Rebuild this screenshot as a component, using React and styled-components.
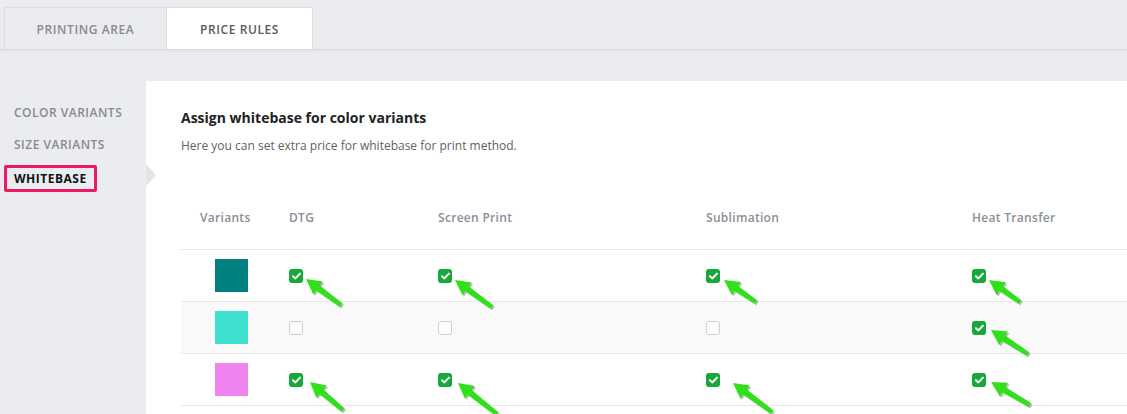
import React from 'react';
import styled, { createGlobalStyle } from 'styled-components';

const GlobalStyle = createGlobalStyle`
  body {
    margin: 0;
    background: #ebecf0;
    font-family: 'Open Sans', 'Liberation Sans', sans-serif;
  }
`;

const Page = styled.div`
  width: 1127px;
  height: 414px;
  overflow: hidden;
  background: #ebecf0;
`;

const TabBar = styled.div`
  display: flex;
  height: 42px;
  padding: 7px 0 0 4px;
  border-bottom: 1px solid #d9dade;
  box-shadow: 0 2px 0 #e4e5e9;
`;

const Tab = styled.div`
  width: ${(p) => p.width}px;
  height: 42px;
  box-sizing: border-box;
  border: 1px solid #dcdde1;
  border-bottom: none;
  border-left: ${(p) => (p.active ? 'none' : '1px solid #dcdde1')};
  background: ${(p) => (p.active ? '#fff' : '#ebecf0')};
  color: ${(p) => (p.active ? '#5a5a5a' : '#8a8a8a')};
  display: flex;
  align-items: center;
  justify-content: center;
  font-size: 12px;
  font-weight: 600;
  letter-spacing: 0.6px;
  padding-top: 1px;
`;

const Body = styled.div`
  display: flex;
  margin-top: 31px;
`;

const Sidebar = styled.div`
  width: 146px;
  padding-top: 15px;
  flex-shrink: 0;
`;

const SideItem = styled.div`
  position: relative;
  height: 32px;
  display: flex;
  align-items: center;
  padding-left: ${(p) => (p.active ? '4px' : '14px')};

  ${(p) =>
    p.active &&
    `
    &::after {
      content: '';
      position: absolute;
      right: -10px;
      top: 4px;
      border-left: 10px solid #e3e4e8;
      border-top: 11px solid transparent;
      border-bottom: 11px solid transparent;
    }
  `}
`;

const SideLabel = styled.span`
  font-size: 12px;
  font-weight: ${(p) => (p.active ? 700 : 600)};
  letter-spacing: 0.5px;
  color: ${(p) => (p.active ? '#111' : '#8a8a8a')};
  ${(p) =>
    p.active &&
    `
    border: 3px solid #ec1a62;
    border-radius: 2px;
    padding: 0 7px;
    line-height: 21px;
    margin-top: 5px;
  `}
`;

const Panel = styled.div`
  flex: 1;
  background: #fff;
  padding: 28px 0 0 35px;
  height: 340px;
`;

const Title = styled.h2`
  margin: 0;
  font-size: 14px;
  line-height: 18px;
  font-weight: 700;
  color: #222;
`;

const Subtitle = styled.p`
  margin: 10px 0 0;
  font-size: 12px;
  line-height: 18px;
  color: #5f5f5f;
`;

const Table = styled.div`
  margin-top: 47px;
  display: grid;
  grid-template-columns: 108px 149px 268px 266px 1fr;
`;

const HeadCell = styled.div`
  height: 48px;
  box-sizing: border-box;
  padding: 7px 0 0 ${(p) => p.indent || 0}px;
  font-size: 12px;
  line-height: 18px;
  font-weight: 600;
  letter-spacing: 0.3px;
  color: #8b8d98;
  border-bottom: 1px solid #e6e6e6;
`;

const Cell = styled.div`
  position: relative;
  height: 52px;
  box-sizing: border-box;
  display: flex;
  align-items: center;
  padding-left: ${(p) => p.indent || 0}px;
  background: ${(p) => (p.shaded ? '#f9f9f9' : '#fff')};
  border-bottom: 1px solid #e8e8e8;
`;

const Swatch = styled.div`
  width: 33px;
  height: 33px;
  background: ${(p) => p.color};
`;

const Box = styled.div`
  position: relative;
  width: 14px;
  height: 14px;
  box-sizing: border-box;
  border-radius: 3px;
  background: ${(p) => (p.checked ? '#17a83b' : '#fff')};
  border: ${(p) => (p.checked ? 'none' : '1px solid #cfcfcf')};
  display: flex;
  align-items: center;
  justify-content: center;
`;

const ArrowSvg = styled.svg`
  position: absolute;
  overflow: visible;
  pointer-events: none;
  z-index: 2;
`;

function Arrow({ tip, vec }) {
  const [tx, ty] = tip;
  const [dx, dy] = vec;
  const len = Math.hypot(dx, dy);
  const ux = dx / len;
  const uy = dy / len;
  const nx = -uy;
  const ny = ux;
  const head = 15;
  const hw = 8;
  const sw = 3;
  const bx = ux * head;
  const by = uy * head;
  const pts = [
    [0, 0],
    [bx + nx * hw, by + ny * hw],
    [bx + nx * sw, by + ny * sw],
    [dx + nx * (sw - 0.8), dy + ny * (sw - 0.8)],
    [dx - nx * (sw - 0.8), dy - ny * (sw - 0.8)],
    [bx - nx * sw, by - ny * sw],
    [bx - nx * hw, by - ny * hw],
  ]
    .map(([x, y]) => `${x.toFixed(1)},${y.toFixed(1)}`)
    .join(' ');
  return (
    <ArrowSvg width="1" height="1" style={{ left: tx, top: ty }}>
      <polygon points={pts} fill="rgba(20,90,10,0.35)" transform="translate(1.5,1.5)" />
      <polygon points={pts} fill="#2fe01a" />
    </ArrowSvg>
  );
}

const Check = () => (
  <svg width="9" height="8" viewBox="0 0 9 8">
    <path d="M1 4.2 L3.4 6.4 L8 1.6" fill="none" stroke="#fff" strokeWidth="2" strokeLinecap="round" strokeLinejoin="round" />
  </svg>
);

const columns = ['DTG', 'Screen Print', 'Sublimation', 'Heat Transfer'];

const rows = [
  {
    color: '#008080',
    cells: [
      { checked: true, tip: [17, 10], vec: [35, 26] },
      { checked: true, tip: [17, 11], vec: [37, 27] },
      { checked: true, tip: [18, 11], vec: [32, 22] },
      { checked: true, tip: [17, 11], vec: [31, 22] },
    ],
  },
  {
    color: '#40e0d0',
    shaded: true,
    cells: [
      { checked: false },
      { checked: false },
      { checked: false },
      { checked: true, tip: [19, 9], vec: [37, 24] },
    ],
  },
  {
    color: '#ee82ee',
    cells: [
      { checked: true, tip: [21, 9], vec: [33, 28] },
      { checked: true, tip: [20, 10], vec: [39, 31] },
      { checked: true, tip: [27, 10], vec: [39, 29] },
      { checked: true, tip: [19, 9], vec: [39, 23] },
    ],
  },
];

export default function App() {
  return (
    <Page>
      <GlobalStyle />
      <TabBar>
        <Tab width={163}>PRINTING AREA</Tab>
        <Tab width={146} active>PRICE RULES</Tab>
      </TabBar>
      <Body>
        <Sidebar>
          <SideItem><SideLabel>COLOR VARIANTS</SideLabel></SideItem>
          <SideItem><SideLabel>SIZE VARIANTS</SideLabel></SideItem>
          <SideItem active><SideLabel active>WHITEBASE</SideLabel></SideItem>
        </Sidebar>
        <Panel>
          <Title>Assign whitebase for color variants</Title>
          <Subtitle>Here you can set extra price for whitebase for print method.</Subtitle>
          <Table>
            <HeadCell indent={19}>Variants</HeadCell>
            {columns.map((c) => (
              <HeadCell key={c}>{c}</HeadCell>
            ))}
            {rows.map((row, i) => (
              <React.Fragment key={i}>
                <Cell indent={34} shaded={row.shaded}>
                  <Swatch color={row.color} />
                </Cell>
                {row.cells.map((cell, j) => (
                  <Cell key={j} shaded={row.shaded}>
                    <Box checked={cell.checked}>
                      {cell.checked && <Check />}
                      {cell.tip && <Arrow tip={cell.tip} vec={cell.vec} />}
                    </Box>
                  </Cell>
                ))}
              </React.Fragment>
            ))}
          </Table>
        </Panel>
      </Body>
    </Page>
  );
}
